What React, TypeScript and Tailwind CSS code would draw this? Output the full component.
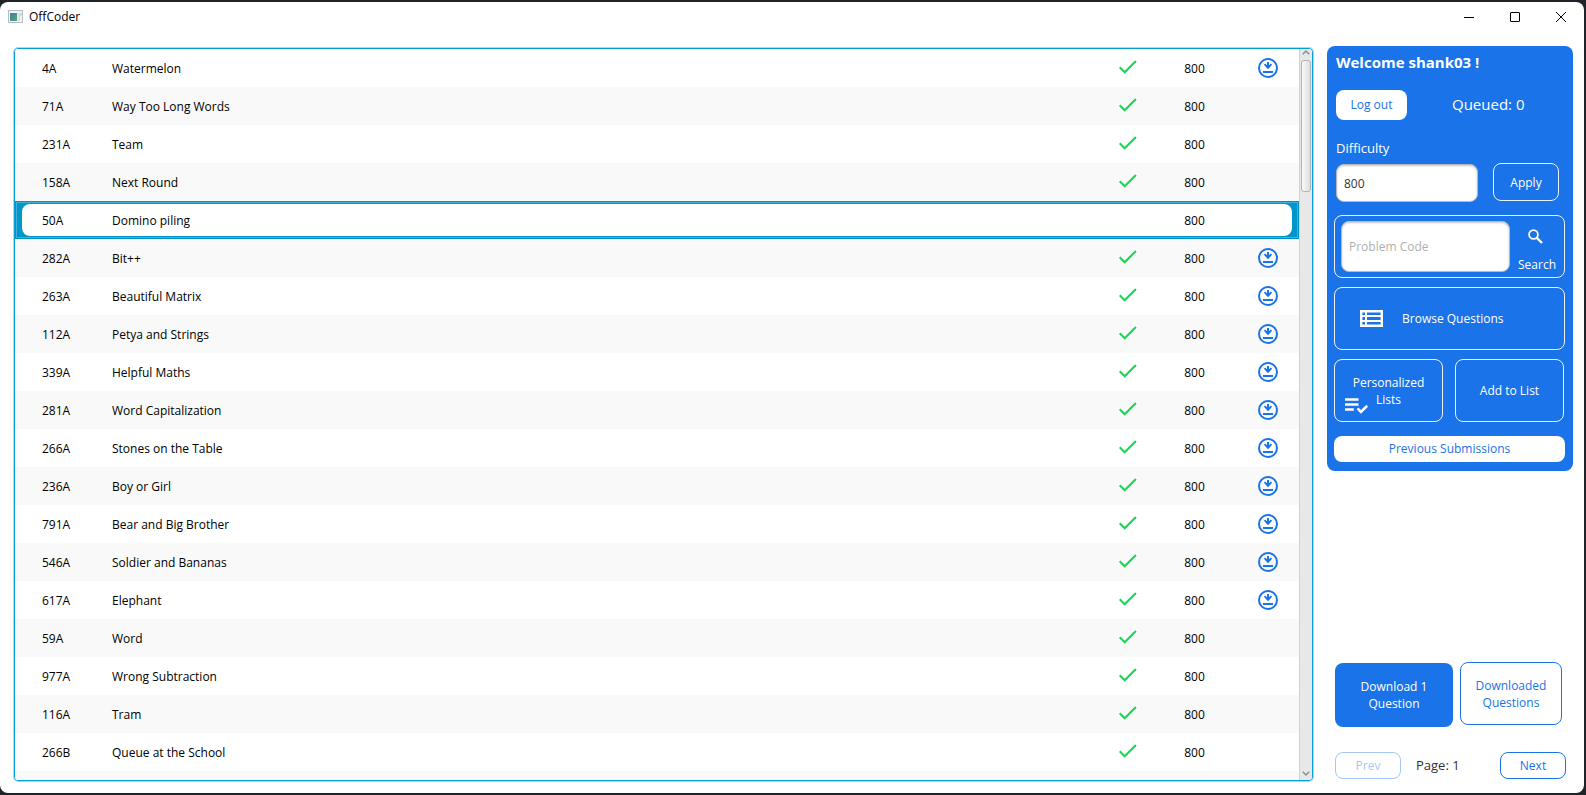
import { useState } from "react";

type Problem = {
  code: string;
  name: string;
  rating: number;
  solved: boolean;
  saved: boolean;
};

const problems: Problem[] = [
  { code: "4A", name: "Watermelon", rating: 800, solved: true, saved: true },
  { code: "71A", name: "Way Too Long Words", rating: 800, solved: true, saved: false },
  { code: "231A", name: "Team", rating: 800, solved: true, saved: false },
  { code: "158A", name: "Next Round", rating: 800, solved: true, saved: false },
  { code: "50A", name: "Domino piling", rating: 800, solved: false, saved: false },
  { code: "282A", name: "Bit++", rating: 800, solved: true, saved: true },
  { code: "263A", name: "Beautiful Matrix", rating: 800, solved: true, saved: true },
  { code: "112A", name: "Petya and Strings", rating: 800, solved: true, saved: true },
  { code: "339A", name: "Helpful Maths", rating: 800, solved: true, saved: true },
  { code: "281A", name: "Word Capitalization", rating: 800, solved: true, saved: true },
  { code: "266A", name: "Stones on the Table", rating: 800, solved: true, saved: true },
  { code: "236A", name: "Boy or Girl", rating: 800, solved: true, saved: true },
  { code: "791A", name: "Bear and Big Brother", rating: 800, solved: true, saved: true },
  { code: "546A", name: "Soldier and Bananas", rating: 800, solved: true, saved: true },
  { code: "617A", name: "Elephant", rating: 800, solved: true, saved: true },
  { code: "59A", name: "Word", rating: 800, solved: true, saved: false },
  { code: "977A", name: "Wrong Subtraction", rating: 800, solved: true, saved: false },
  { code: "116A", name: "Tram", rating: 800, solved: true, saved: false },
  { code: "266B", name: "Queue at the School", rating: 800, solved: true, saved: false },
];

function CheckIcon() {
  return (
    <svg width="18" height="14" viewBox="0 0 18 14" fill="none" aria-label="Solved">
      <path d="M0.700 7.300 L5.700 12.200 L16.900 1" stroke="#14d854" strokeWidth="2.1" />
    </svg>
  );
}

function SavedIcon() {
  return (
    <svg width="20" height="20" viewBox="0 0 20 20" fill="#1a73e8" aria-label="Downloaded">
      <circle cx="10" cy="10" r="9" fill="none" stroke="#1a73e8" strokeWidth="2" />
      <path d="M9 4h2v3.200l1.900-1.700 1.200 1.300L10 11.300 5.900 6.800l1.200-1.300L9 7.200z" />
      <path d="M5 13h10v2H5z" />
    </svg>
  );
}

function ProblemRow({
  problem,
  selected,
  onSelect,
}: {
  problem: Problem;
  selected: boolean;
  onSelect: () => void;
}) {
  return (
    <tr
      onClick={onSelect}
      className={
        selected
          ? "flex h-[38px] border border-[#0093c8] bg-[#0096c9] px-[6px] py-[2px] shadow-[inset_0_0_0_1px_#3fb1d9] [&>td]:bg-white"
          : "flex h-[38px] px-[7px] py-[3px] odd:bg-white even:bg-[#f9f9f9]"
      }
    >
      <td className="flex w-[90px] items-center rounded-l-lg pt-[2px] pl-5">{problem.code}</td>
      <td className="flex flex-1 items-center pt-[2px]">{problem.name}</td>
      <td className="flex w-[35px] items-center justify-center pb-[2px]">
        {problem.solved && <CheckIcon />}
      </td>
      <td className="flex w-[99px] items-center justify-center pt-[2px]">{problem.rating}</td>
      <td className="flex w-12 items-center justify-center rounded-r-lg">{problem.saved && <SavedIcon />}</td>
    </tr>
  );
}

function Scrollbar() {
  return (
    <div className="flex w-[13px] shrink-0 flex-col items-center border-l border-[#d2d2d2] bg-[#e8e8e8]">
      <button aria-label="Scroll up" className="flex h-[11px] items-center justify-center pb-1">
        <svg width="8" height="5" viewBox="0 0 8 5" fill="none" stroke="#8a8a8a" strokeWidth="1.4">
          <path d="M0.8 4.200 L4 1 L7.2 4.200" />
        </svg>
      </button>
      <div className="h-[132px] w-[10px] rounded-[3px] border border-[#b3b3b3] bg-linear-to-r from-[#fafafa] to-[#dedede]" />
      <div className="flex-1" />
      <button aria-label="Scroll down" className="flex h-[11px] items-center justify-center pb-[2px]">
        <svg width="8" height="5" viewBox="0 0 8 5" fill="none" stroke="#8a8a8a" strokeWidth="1.4">
          <path d="M0.8 0.800 L4 4 L7.2 0.800" />
        </svg>
      </button>
    </div>
  );
}

function TitleBar() {
  return (
    <header className="flex h-[30px] shrink-0 items-center pl-2">
      <svg width="15" height="13" viewBox="0 0 15 13" className="mb-[2px]">
        <defs>
          <linearGradient id="app" x1="0" y1="0" x2="1" y2="1">
            <stop offset="0" stopColor="#3f7fa6" />
            <stop offset="1" stopColor="#55a878" />
          </linearGradient>
        </defs>
        <rect x="0.5" y="0.5" width="14" height="12" fill="#f3f3f5" stroke="#b9bcc4" />
        <rect x="2" y="3" width="7" height="8" fill="url(#app)" />
        <rect x="9" y="3" width="2" height="8" fill="#e4e6ea" />
        <path d="M11 3h3v2l-2 1v5h-1z" fill="#c5dbe0" />
      </svg>
      <h1 className="flex-1 pl-[6px] text-xs">OffCoder</h1>
      <button aria-label="Minimize" className="flex w-[46px] justify-center">
        <svg width="10" height="10" viewBox="0 0 10 10" stroke="#000">
          <path d="M0 5.500h10" />
        </svg>
      </button>
      <button aria-label="Maximize" className="flex w-[46px] justify-center">
        <svg width="10" height="10" viewBox="0 0 10 10" fill="none" stroke="#000">
          <rect x="0.5" y="0.5" width="9" height="9" rx="0.5" />
        </svg>
      </button>
      <button aria-label="Close" className="flex w-[46px] justify-center">
        <svg width="10" height="10" viewBox="0 0 10 10" stroke="#000">
          <path d="M0 0l10 10M10 0L0 10" />
        </svg>
      </button>
    </header>
  );
}

const field =
  "min-w-0 rounded-lg border border-[#b9b9b9] bg-white px-[7px] text-[#333] shadow-[inset_0_1px_2px_#c4c4c4] placeholder:text-[#b0b0b0]";

function AccountPanel() {
  return (
    <section className="rounded-lg bg-[#1a73e8] pt-1 pr-2 pb-[9px] pl-[7px] text-white">
      <h2 className="pl-[2px] text-[15px] leading-6 font-bold">Welcome shank03 !</h2>
      <div className="mt-4 flex items-center pl-[2px]">
        <button className="h-[30px] w-[71px] rounded-lg bg-white text-[#1a73e8]">Log out</button>
        <span className="mb-[2px] ml-[45px] text-[15px] leading-5">Queued: 0</span>
      </div>
      <label htmlFor="difficulty" className="mt-[18px] block pl-[2px] text-[13px] leading-5">
        Difficulty
      </label>
      <div className="mt-[5px] flex items-start justify-between pr-[6px] pl-[2px]">
        <input id="difficulty" defaultValue="800" className={`${field} mt-px h-[38px] w-[142px]`} />
        <button className="h-[38px] w-[66px] rounded-lg border border-white/90 pt-[2px]">Apply</button>
      </div>
      <div className="mt-[13px] flex h-[63px] items-center rounded-lg border border-white/90 pl-[6px]">
        <input
          aria-label="Problem Code"
          placeholder="Problem Code"
          className={`${field} h-[51px] w-[169px]`}
        />
        <button className="flex flex-1 flex-col items-center gap-3 pt-2">
          <svg
            width="15"
            height="15"
            viewBox="0 0 15 15"
            fill="none"
            stroke="#fff"
            strokeWidth="1.8"
            className="mr-1"
          >
            <circle cx="5.500" cy="5.500" r="4.400" />
            <path d="M8.800 8.800 L14 14" strokeWidth="2.4" />
          </svg>
          <span className="leading-[17px]">Search</span>
        </button>
      </div>
      <button className="mt-[9px] flex h-[63px] w-full items-center rounded-lg border border-white/90 pl-[25px]">
        <svg width="23" height="17" viewBox="0 0 23 17" fill="none" stroke="#fff">
          <path d="M1.200 1.200h20.600v14.600H1.200z" strokeWidth="2.400" />
          <path d="M2 6h19 M2 11h19 M6 2v13" strokeWidth="2" />
        </svg>
        <span className="pl-[19px]">Browse Questions</span>
      </button>
      <div className="mt-[9px] flex gap-3">
        <button className="relative h-[63px] w-[109px] rounded-lg border border-white/90 px-4 leading-[17px]">
          Personalized Lists
          <svg
            width="23"
            height="16"
            viewBox="0 0 23 16"
            fill="none"
            stroke="#fff"
            strokeWidth="2.600"
            className="absolute bottom-[7px] left-[10px]"
          >
            <path d="M0 1.500h13.500 M0 6.500h13.500 M0 11.500h8.800" />
            <path d="M12.500 10.300 L16 13.800 L22.200 7.600" />
          </svg>
        </button>
        <button className="h-[63px] w-[109px] rounded-lg border border-white/90">Add to List</button>
      </div>
      <button className="mt-[14px] h-[26px] w-full rounded-lg bg-white text-[#1a73e8]">
        Previous Submissions
      </button>
    </section>
  );
}

function DownloadPanel() {
  return (
    <section className="pr-[7px] pb-[14px] pl-2 text-[#1a73e8]">
      <div className="flex items-start gap-[7px]">
        <button className="mt-px h-16 w-[118px] rounded-lg bg-[#1a73e8] px-5 leading-[17px] text-white">
          Download 1 Question
        </button>
        <button className="h-[63px] w-[102px] rounded-lg border border-[#1a73e8] px-3 leading-[17px]">
          Downloaded Questions
        </button>
      </div>
      <nav className="mt-[25px] flex items-center">
        <button disabled className="h-[27px] w-[66px] rounded-lg border border-[#1a73e8] opacity-40">
          Prev
        </button>
        <span className="flex-1 pt-px pl-[15px] text-[13px] text-[#333]">Page: 1</span>
        <button className="h-[27px] w-[66px] rounded-lg border border-[#1a73e8]">Next</button>
      </nav>
    </section>
  );
}

export default function App() {
  const [selected, setSelected] = useState("50A");

  return (
    <div className="h-screen bg-[#202429] pt-[2px] pr-[2px] pb-[2px] font-['Open_Sans','Noto_Sans',sans-serif] text-xs text-black">
      <div className="flex h-full flex-col rounded-lg bg-white">
        <TitleBar />
        <main className="flex min-h-0 flex-1 gap-[14px] pt-[14px] pr-[11px] pl-[14px]">
          <div className="mt-[2px] mb-3 flex min-w-0 flex-1 overflow-hidden rounded-[4px] border border-[#039ed3] shadow-[0_0_0_1px_#a5dcf0]">
            <div className="min-w-0 flex-1 overflow-hidden">
              <table className="block">
                <tbody className="block">
                  {problems.map((problem) => (
                    <ProblemRow
                      key={problem.code}
                      problem={problem}
                      selected={problem.code === selected}
                      onSelect={() => setSelected(problem.code)}
                    />
                  ))}
                </tbody>
              </table>
              <div className="h-[38px] bg-[#f9f9f9]" />
            </div>
            <Scrollbar />
          </div>
          <aside className="flex w-[246px] shrink-0 flex-col justify-between">
            <AccountPanel />
            <DownloadPanel />
          </aside>
        </main>
      </div>
    </div>
  );
}
